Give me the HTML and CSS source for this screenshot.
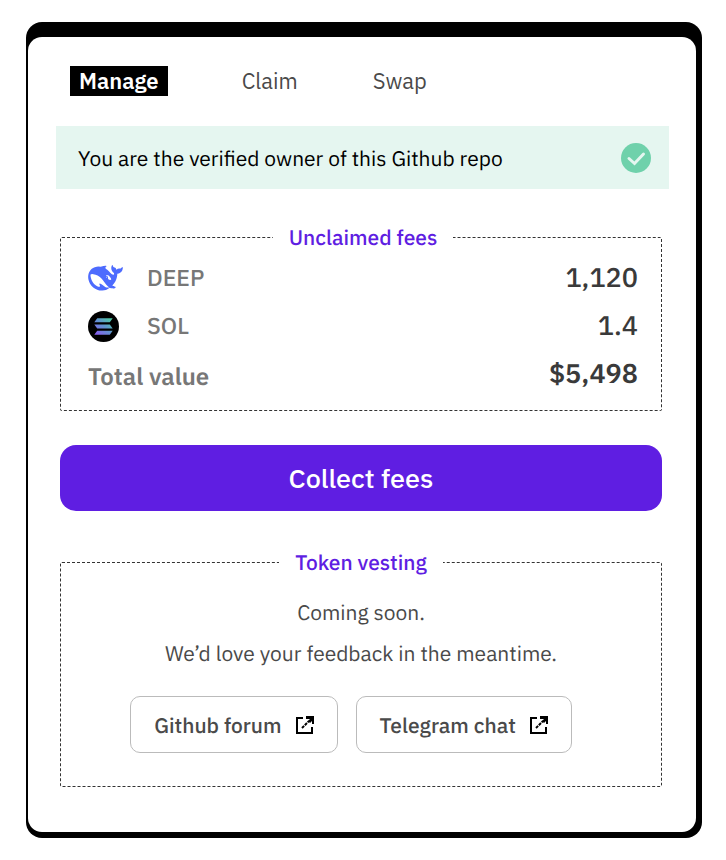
FILE: index.html
```html
<!DOCTYPE html>
<html lang="en">
<head>
    <meta charset="utf-8">
    <meta name="viewport" content="width=device-width, initial-scale=1">
    <title>Manage fees</title>
    <link rel="stylesheet" href="styles.css">
</head>
<body>
    <div class="frame">
        <main class="card">
            <nav class="tabs">
                <button type="button" class="tab active">Manage</button>
                <button type="button" class="tab">Claim</button>
                <button type="button" class="tab">Swap</button>
            </nav>

            <div class="banner">
                <span>You are the verified owner of this Github repo</span>
                <svg class="check" viewBox="0 0 30 30" aria-hidden="true">
                    <circle cx="15" cy="15" r="15" fill="#6fd1ab"/>
                    <path d="M8 15.500l5.500 5 9-9.500" fill="none" stroke="#e5f6f0" stroke-width="3" stroke-linecap="round"/>
                </svg>
            </div>

            <fieldset class="panel fees">
                <legend>Unclaimed fees</legend>
                <table>
                    <tr>
                        <td class="coin">
                            <svg class="deep" viewBox="0 3 24 18" aria-hidden="true">
                                <path fill="#4d6bfe" d="M23.748 4.482c-.254-.124-.364.113-.512.234-.051.039-.094.09-.137.136-.372.397-.806.657-1.373.626-.829-.046-1.537.214-2.163.848-.133-.782-.575-1.248-1.247-1.548-.352-.156-.708-.311-.955-.65-.172-.241-.219-.51-.305-.774-.055-.16-.11-.323-.293-.35-.2-.031-.278.136-.356.276-.313.572-.434 1.202-.422 1.84.027 1.436.633 2.58 1.838 3.393.137.093.172.187.129.323-.082.28-.18.552-.266.833-.055.179-.137.217-.329.14a5.526 5.526 0 01-1.736-1.18c-.857-.828-1.631-1.742-2.597-2.458a11.365 11.365 0 00-.689-.471c-.985-.957.13-1.743.388-1.836.27-.098.093-.432-.779-.428-.872.004-1.67.295-2.687.684a3.055 3.055 0 01-.465.137 9.597 9.597 0 00-2.883-.102c-1.885.21-3.39 1.102-4.497 2.623C.082 8.606-.231 10.684.152 12.85c.403 2.284 1.569 4.175 3.36 5.653 1.858 1.533 3.997 2.284 6.438 2.14 1.482-.085 3.133-.284 4.994-1.86.47.234.962.327 1.78.397.63.059 1.236-.03 1.705-.128.735-.156.684-.837.419-.961-2.155-1.004-1.682-.595-2.113-.926 1.096-1.296 2.746-2.642 3.392-7.003.05-.347.007-.565 0-.845-.004-.17.035-.237.23-.256a4.173 4.173 0 001.545-.475c1.396-.763 1.96-2.015 2.093-3.517.02-.23-.004-.467-.247-.588zM11.581 18c-2.089-1.642-3.102-2.183-3.52-2.16-.392.024-.321.471-.235.763.09.288.207.486.371.739.114.167.192.416-.113.603-.673.416-1.842-.14-1.897-.167-1.361-.802-2.5-1.86-3.301-3.307-.774-1.393-1.224-2.887-1.298-4.482-.02-.386.093-.522.477-.592a4.696 4.696 0 011.529-.039c2.132.312 3.946 1.265 5.468 2.774.868.86 1.525 1.887 2.202 2.891.72 1.066 1.494 2.082 2.48 2.914.348.292.625.514.891.677-.802.09-2.14.11-3.054-.614zm1-6.44a.306.306 0 01.415-.287.302.302 0 01.2.288.306.306 0 01-.31.307.303.303 0 01-.304-.308zm3.11 1.596c-.2.081-.399.151-.59.16a1.245 1.245 0 01-.798-.254c-.274-.23-.47-.358-.552-.758a1.73 1.73 0 01.016-.588c.07-.327-.008-.537-.239-.727-.187-.156-.426-.199-.688-.199a.559.559 0 01-.254-.078c-.11-.054-.2-.19-.114-.358.028-.054.16-.186.192-.21.356-.202.767-.136 1.146.016.352.144.618.408 1.001.782.391.451.462.576.685.914.176.265.336.537.445.848.067.195-.019.354-.25.452z"/>
                            </svg>
                        </td>
                        <th scope="row">DEEP</th>
                        <td class="amount">1,120</td>
                    </tr>
                    <tr>
                        <td class="coin">
                            <svg class="sol" viewBox="0 0 32 32" aria-hidden="true">
                                <defs>
                                    <linearGradient id="solFill" gradientUnits="userSpaceOnUse" x1="8" y1="24" x2="24" y2="7">
                                        <stop offset="0" stop-color="#8a5cf0"/>
                                        <stop offset=".5" stop-color="#5f93cf"/>
                                        <stop offset="1" stop-color="#4fcf9f"/>
                                    </linearGradient>
                                </defs>
                                <circle cx="16" cy="16" r="16"/>
                                <path fill="url(#solFill)" d="M9.500 7.500h16l-3 4h-16zM6.500 14h16l3 4h-16zM9.500 20.500h16l-3 4h-16z"/>
                            </svg>
                        </td>
                        <th scope="row">SOL</th>
                        <td class="amount">1.4</td>
                    </tr>
                    <tr class="total">
                        <th scope="row" colspan="2">Total value</th>
                        <td class="amount">$5,498</td>
                    </tr>
                </table>
            </fieldset>

            <button type="button" class="collect">Collect fees</button>

            <fieldset class="panel vesting">
                <legend>Token vesting</legend>
                <p>Coming soon.</p>
                <p>We’d love your feedback in the meantime.</p>
                <div class="links">
                    <a href="#forum">Github forum
                        <svg viewBox="0 0 18 18" aria-hidden="true">
                            <path d="M7 2H1v15h15v-6" fill="none" stroke="#000" stroke-width="2"/>
                            <path d="M10 0h8v8h-2V5l-2 2-2-2 2-2h-4z"/>
                            <path d="M6 12l7-7" fill="none" stroke="#000" stroke-width="2" stroke-dasharray="3 1"/>
                        </svg>
                    </a>
                    <a href="#chat">Telegram chat
                        <svg viewBox="0 0 18 18" aria-hidden="true">
                            <path d="M7 2H1v15h15v-6" fill="none" stroke="#000" stroke-width="2"/>
                            <path d="M10 0h8v8h-2V5l-2 2-2-2 2-2h-4z"/>
                            <path d="M6 12l7-7" fill="none" stroke="#000" stroke-width="2" stroke-dasharray="3 1"/>
                        </svg>
                    </a>
                </div>
            </fieldset>
        </main>
    </div>
</body>
</html>
```
FILE: styles.css
```css
* {
    box-sizing: border-box;
}
body {
    margin: 0;
    padding: 22px 24px 22px 26px;
    background-color: white;
    font-family: "IBM Plex Sans", Roboto, sans-serif;
    font-size: 21px;
    line-height: 30px;
    color: #4a4a4a;
    text-rendering: geometricPrecision;
}
button {
    font: inherit;
    border: none;
    cursor: pointer;
}
.frame {
    background-color: black;
    border-radius: 16px;
    padding: 15px 6px 6px 2px;
}
.card {
    background-color: white;
    border-radius: 14px;
    padding: 29px 34px 45px 32px;
}
.tabs {
    display: flex;
    gap: 57px;
    margin-left: 10px;
}
.tab {
    background: none;
    color: #4a4a4a;
    padding: 0 9px;
    font-size: 22px;
}
.tab.active {
    margin-right: 8px;
    background-color: black;
    color: white;
    font-weight: 600;
}
.banner {
    display: flex;
    justify-content: space-between;
    align-items: center;
    height: 63px;
    margin: 30px -7px 0 -4px;
    padding: 0 18px 0 22px;
    background-color: #e5f6f0;
    color: black;
}
.check {
    width: 30px;
    height: 30px;
}
.panel {
    min-width: 0;
    margin: 0;
    border: 1px dashed #333;
    border-radius: 2px;
}
.panel legend {
    margin: 0 auto;
    padding: 0 16px;
    color: #5f1ee2;
    font-weight: 500;
}
.fees {
    margin-top: 33px;
    padding: 2px 23px 12px 27px;
}
.fees table {
    width: 100%;
    border-collapse: collapse;
}
.fees td,
.fees th {
    height: 48px;
    padding: 0;
}
.fees th {
    text-align: left;
    font-size: 23px;
    font-weight: 500;
    color: #777;
}
.fees .amount {
    text-align: right;
    font-size: 27px;
    font-weight: 500;
    color: #3a3a3a;
}
.fees .total th,
.fees .total .amount {
    font-weight: 600;
}
.fees .total th {
    padding-top: 4px;
    font-size: 24px;
}
.coin {
    width: 59px;
}
.coin svg {
    display: block;
}
.deep {
    width: 35px;
    height: 26px;
}
.sol {
    width: 31px;
    height: 31px;
}
.collect {
    display: block;
    width: 100%;
    height: 66px;
    margin: 34px 0 36px;
    border-radius: 16px;
    background-color: #5f1ee2;
    color: white;
    font-size: 27px;
    font-weight: 500;
}
.vesting {
    padding: 14px 20px 33px;
    text-align: center;
}
.vesting p {
    margin: 6px 0 11px;
}
.links {
    display: flex;
    justify-content: center;
    gap: 18px;
    margin: 28px 20px 0 0;
}
.links a {
    display: flex;
    align-items: center;
    gap: 14px;
    height: 57px;
    padding: 0 23px;
    border: 1px solid #bbb;
    border-radius: 10px;
    color: #4a4a4a;
    font-weight: 500;
    text-decoration: none;
}
.links svg {
    width: 18px;
    height: 18px;
}
```
